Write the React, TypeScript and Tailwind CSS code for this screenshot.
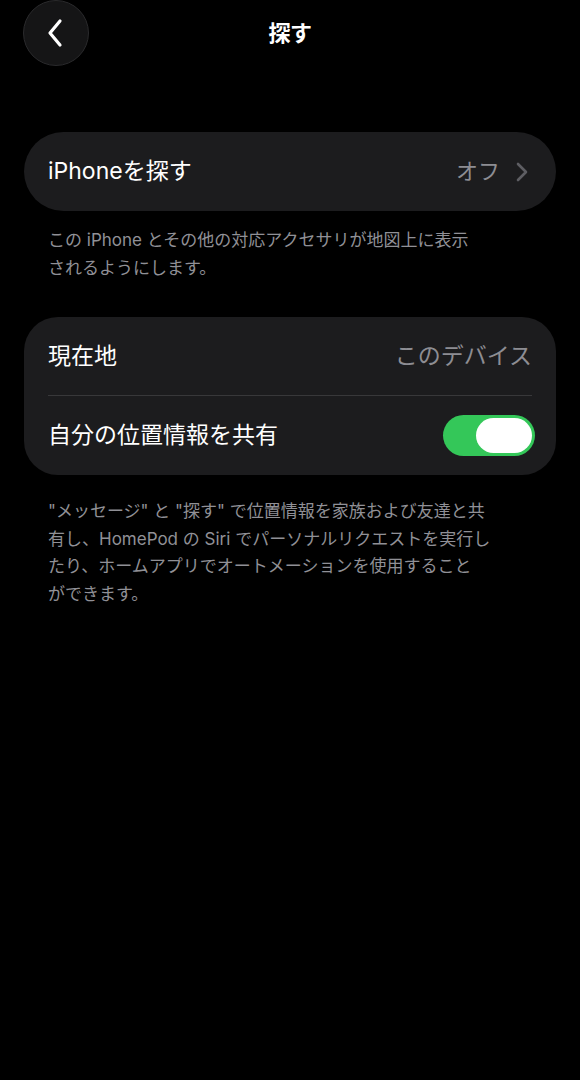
const font = {
  fontFamily: '"Inter", "Noto Sans CJK JP", sans-serif',
};

const App = () => {
  return (
    <div
      className="w-[580px] min-h-[1080px] bg-black text-white"
      style={font}
    >
      {/* Nav bar */}
      <div className="relative h-[66px] flex items-center justify-center">
        <button className="absolute left-[23px] top-0 w-[66px] h-[66px] rounded-full bg-[#151516] border border-[#2a2a2c] flex items-center justify-center">
          <svg width="22" height="30" viewBox="0 0 22 30" fill="none">
            <path
              d="M15 3 L5 15 L15 27"
              stroke="white"
              strokeWidth="3.2"
              strokeLinecap="round"
              strokeLinejoin="round"
            />
          </svg>
        </button>
        <h1 className="text-[22px] font-bold tracking-tight">探す</h1>
      </div>

      <div className="px-6 pt-[66px]">
        {/* Find My iPhone */}
        <div className="h-[79px] rounded-full bg-[#1c1c1e] flex items-center justify-between pl-6 pr-7">
          <span className="text-[23px]">iPhoneを探す</span>
          <div className="flex items-center gap-4">
            <span className="text-[22px] text-[#8d8d93]">オフ</span>
            <svg width="12" height="20" viewBox="0 0 12 20" fill="none">
              <path
                d="M2 2 L10 10 L2 18"
                stroke="#5e5e63"
                strokeWidth="2.6"
                strokeLinecap="round"
                strokeLinejoin="round"
              />
            </svg>
          </div>
        </div>
        <p className="px-6 pt-[15px] text-[17px] leading-[28px] text-[#909096]">
          この iPhone とその他の対応アクセサリが地図上に表示
          <br />
          されるようにします。
        </p>

        {/* Location */}
        <div className="mt-[35px] rounded-[34px] bg-[#1c1c1e] pl-6 pr-[21px]">
          <div className="h-[78px] flex items-center justify-between pr-[3px]">
            <span className="text-[23px]">現在地</span>
            <span className="text-[23px] text-[#8d8d93]">このデバイス</span>
          </div>
          <div className="h-px bg-[#38383a] mr-[3px]" />
          <div className="h-[79px] flex items-center justify-between">
            <span className="text-[23px]">自分の位置情報を共有</span>
            <div className="w-[92px] h-[41px] rounded-full bg-[#34c759] p-[3px] flex justify-end">
              <div className="w-[56px] h-[35px] rounded-full bg-white" />
            </div>
          </div>
        </div>
        <p className="px-6 pt-[23px] text-[17px] leading-[27.5px] text-[#909096]">
          "メッセージ" と "探す" で位置情報を家族および友達と共
          <br />
          有し、HomePod の Siri でパーソナルリクエストを実行し
          <br />
          たり、ホームアプリでオートメーションを使用すること
          <br />
          ができます。
        </p>
      </div>
    </div>
  );
};

export default App;
